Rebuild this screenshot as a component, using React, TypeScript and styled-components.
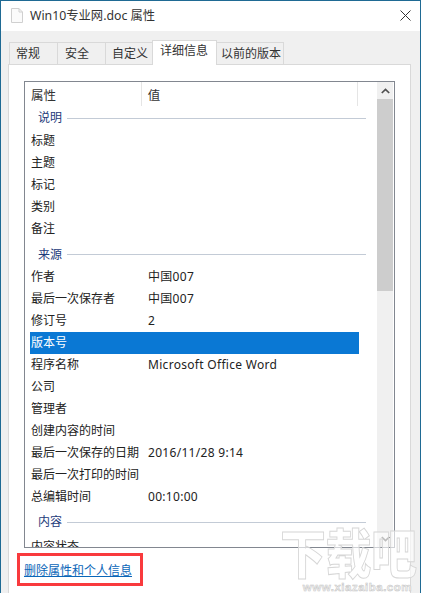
import React from "react";
import styled, { createGlobalStyle } from "styled-components";

const Global = createGlobalStyle`
  html, body { margin: 0; padding: 0; background: #f0f0f0; }
  #root { width: 421px; height: 593px; overflow: hidden; }
`;
const fontStack = `"Noto Sans", "Noto Sans CJK SC", sans-serif`;
const Win = styled.div`
  position: relative; width: 421px; height: 593px; box-sizing: border-box;
  border: 1px solid #1f6a94; border-bottom: 0; background: #f0f0f0;
  display: flex; flex-direction: column; overflow: hidden;
  font: 12px/16px ${fontStack}; color: #222;
`;
const TitleBar = styled.div`
  height: 30px; flex: none; background: #fff; display: flex; align-items: center; box-sizing: border-box;
  padding: 0 9px 1px 10px; font-size: 12.3px; color: #333;
`;
const TitleText = styled.span` margin-left: 7px; flex: 1; `;
const Tabs = styled.div` display: flex; align-items: flex-end; height: 33px; flex: none; padding-left: 9px; `;
const Tab = styled.div<{ $active?: boolean; $w: number; $pad: number }>`
  width: ${p => p.$w}px; box-sizing: border-box; padding-left: ${p => p.$pad}px; white-space: nowrap;
  height: ${p => (p.$active ? 25 : 22)}px;
  margin-left: -1px; border: 1px solid #d9d9d9; border-bottom: 0;
  background: ${p => (p.$active ? "#fff" : "#f0f0f0")};
  line-height: ${p => (p.$active ? 20 : 21)}px; color: #333;
  position: relative; z-index: ${p => (p.$active ? 1 : 0)};
  margin-bottom: ${p => (p.$active ? -1 : 0)}px;
`;
const Panel = styled.div`
  flex: 1; margin: 0 9px 0 7px; background: #fff; border: 1px solid #d9d9d9; border-bottom: 0;
  padding: 16px 15px 0 15px; display: flex; flex-direction: column;
`;
const ListBox = styled.div`
  height: 467px; flex: none; box-sizing: border-box; border: 1px solid #828790; display: flex; background: #fff;
`;
const List = styled.div` flex: 1; min-width: 0; overflow: hidden; padding: 0 19px 0 6px; `;
const HeaderRow = styled.div` display: flex; height: 24px; align-items: center; `;
const HeaderCell = styled.div<{ $w: number; $pad?: number }>`
  width: ${p => p.$w}px; padding-left: ${p => p.$pad ?? 0}px; box-sizing: border-box;
  height: 24px; line-height: 27px; border-right: 1px solid #e5e5e5; font-size: 12.5px; color: #333;
`;
const GroupRow = styled.div<{ $h: number; $top: number; $bottom: number }>`
  display: flex; align-items: center; box-sizing: border-box; height: ${p => p.$h}px;
  padding: ${p => p.$top}px 0 ${p => p.$bottom}px 7px;
  gap: 5px; color: #1d3a7a; font-size: 12px;
`;
const GroupLine = styled.div` flex: 1; height: 1px; background: #c3cbd6; margin-right: -8px; `;
const Row = styled.div<{ $selected?: boolean }>`
  display: flex; height: 22px; align-items: center; margin-left: -1px; margin-right: -1px; padding-left: 1px;
  background: ${p => (p.$selected ? "#0a78d4" : "transparent")};
  color: ${p => (p.$selected ? "#fff" : "#222")};
  white-space: nowrap; font-size: 12px;
`;
const Key = styled.div` width: 117px; flex: none; `;
const Val = styled.div` font-size: 12px; letter-spacing: .3px; `;
const Scroll = styled.div` width: 16px; flex: none; margin-right: 1px; display: flex; flex-direction: column; background: #f0f0f0; `;
const ScrollBtn = styled.div` height: 17px; flex: none; display: flex; align-items: center; justify-content: center; `;
const Thumb = styled.div` height: 192px; flex: none; background: #cdcdcd; `;
const ScrollGap = styled.div` flex: 1; `;
const Foot = styled.div`
  margin: 5px 0 0 -7px; width: 126px; height: 33px; box-sizing: border-box; border: 3px solid #f93a3d;
  display: flex; align-items: center; padding-left: 4px; padding-top: 2px;
`;
const LinkText = styled.a` color: #0a66b8; text-decoration: underline; font-size: 12px; white-space: nowrap; `;
const Water = styled.div`
  position: absolute; left: 279px; top: 519px; width: 137px; height: 72px; pointer-events: none;
  display: flex; flex-direction: column; align-items: center;
`;
const WaterTitle = styled.div`
  font: 900 53px/62px "Noto Sans CJK SC", sans-serif; color: rgba(255,255,255,.62);
  -webkit-text-stroke: 1px #d6d6d6; white-space: nowrap;
  transform: scaleX(.86); transform-origin: center;
`;
const WaterUrl = styled.div`
  align-self: flex-end; margin: 0 5px 0 0;
  font: 700 11.5px/10px "Liberation Sans", sans-serif; color: #f4f4f4; letter-spacing: .5px;
  -webkit-text-stroke: .5px #c4c4c4;
`;

const DocIcon = () => (
  <svg width="12" height="15" viewBox="0 0 12 15">
    <path d="M.5.5h7.500l3.500 3.500v10.500H.5z" fill="#fbfbfb" stroke="#d0d0d0" />
    <path d="M8 .5V4h3.500" fill="none" stroke="#d0d0d0" />
  </svg>
);
const Close = () => (
  <svg width="11" height="11" viewBox="0 0 11 11"><path d="M.5.5l10 10M10.500.5l-10 10" stroke="#333" strokeWidth="1" fill="none" /></svg>
);
const Chev = ({ up }: { up?: boolean }) => (
  <svg width="9" height="6" viewBox="0 0 9 6">
    <path d={up ? "M.8 5L4.500 1.400 8.200 5" : "M.8 1L4.500 4.600 8.200 1"} stroke="#505050" strokeWidth="1.7" fill="none" />
  </svg>
);

const tabs: [string, number, number][] = [
  ["常规", 49, 6], ["安全", 49, 7], ["自定义", 48, 6], ["详细信息", 65, 7], ["以前的版本", 68, 4],
];

type R = { k: string; v?: string; sel?: boolean };
const Rows = ({ items }: { items: R[] }) => (
  <>
    {items.map(r => (
      <Row key={r.k} $selected={r.sel}><Key>{r.k}</Key><Val>{r.v}</Val></Row>
    ))}
  </>
);
const Group = ({ t, h, top = 0, bottom = 0 }: { t: string; h: number; top?: number; bottom?: number }) => (
  <GroupRow $h={h} $top={top} $bottom={bottom}>{t}<GroupLine /></GroupRow>
);

export default function App() {
  return (
    <Win>
      <Global />
      <TitleBar>
        <DocIcon />
        <TitleText>Win10专业网.doc 属性</TitleText>
        <Close />
      </TitleBar>
      <Tabs>
        {tabs.map(([t, w, pad], i) => <Tab key={t} $w={w} $pad={pad} $active={i === 3}>{t}</Tab>)}
      </Tabs>
      <Panel>
        <ListBox>
          <List>
            <HeaderRow><HeaderCell $w={111}>属性</HeaderCell><HeaderCell $w={217} $pad={6}>值</HeaderCell></HeaderRow>
            <Group t="说明" h={24} />
            <Rows items={[{ k: "标题" }, { k: "主题" }, { k: "标记" }, { k: "类别" }, { k: "备注" }]} />
            <Group t="来源" h={26} top={3} />
            <Rows items={[
              { k: "作者", v: "中国007" }, { k: "最后一次保存者", v: "中国007" }, { k: "修订号", v: "2" },
              { k: "版本号", sel: true }, { k: "程序名称", v: "Microsoft Office Word" }, { k: "公司" }, { k: "管理者" },
              { k: "创建内容的时间" }, { k: "最后一次保存的日期", v: "2016/11/28 9:14" }, { k: "最后一次打印的时间" }, { k: "总编辑时间", v: "00:10:00" },
            ]} />
            <Group t="内容" h={28} />
            <Rows items={[{ k: "内容状态" }]} />
          </List>
          <Scroll>
            <ScrollBtn><Chev up /></ScrollBtn>
            <Thumb />
            <ScrollGap />
            <ScrollBtn><Chev /></ScrollBtn>
          </Scroll>
        </ListBox>
        <Foot><LinkText>删除属性和个人信息</LinkText></Foot>
      </Panel>
      <Water>
        <WaterTitle>下载吧</WaterTitle>
        <WaterUrl>www.xiazaiba.com</WaterUrl>
      </Water>
    </Win>
  );
}
